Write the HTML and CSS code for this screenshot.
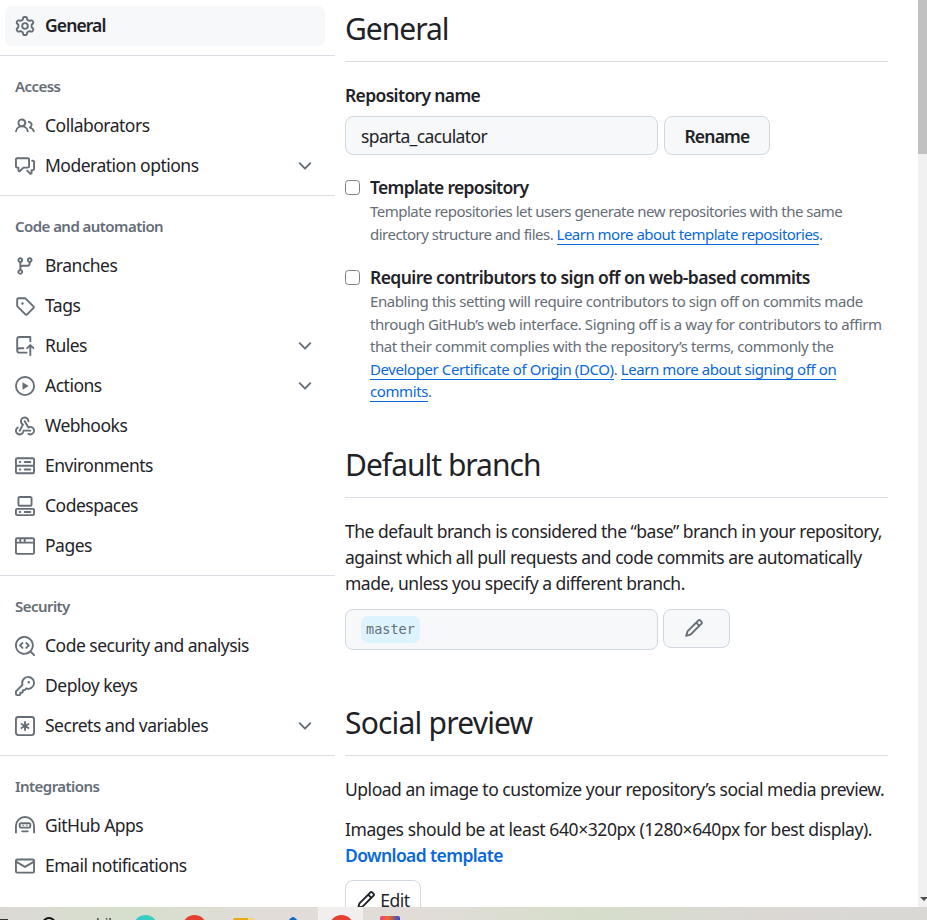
FILE: index.html
```html
<!DOCTYPE html>
<html lang="en">
<head>
<meta charset="UTF-8">
<title>General</title>
<link rel="stylesheet" href="styles.css">
</head>
<body>
<svg class="defs" width="0" height="0">
	<symbol id="i-gear" viewBox="0 0 16 16"><path d="M8 0a8.2 8.2 0 0 1 .701.031C9.444.095 9.99.645 10.16 1.29l.288 1.107c.018.066.079.158.212.224.231.114.454.243.668.386.123.082.233.09.299.071l1.103-.303c.644-.176 1.392.021 1.82.63.27.385.506.792.704 1.218.315.675.111 1.422-.364 1.891l-.814.806c-.049.048-.098.147-.088.294.016.257.016.515 0 .772-.01.147.038.246.088.294l.814.806c.475.469.679 1.216.364 1.891a7.977 7.977 0 0 1-.704 1.217c-.428.61-1.176.807-1.82.63l-1.102-.302c-.067-.019-.177-.011-.3.071a5.909 5.909 0 0 1-.668.386c-.133.066-.194.158-.211.224l-.29 1.106c-.168.646-.715 1.196-1.458 1.26a8.006 8.006 0 0 1-1.402 0c-.743-.064-1.289-.614-1.458-1.26l-.289-1.106c-.018-.066-.079-.158-.212-.224a5.738 5.738 0 0 1-.668-.386c-.123-.082-.233-.09-.299-.071l-1.103.303c-.644.176-1.392-.021-1.82-.63a8.12 8.12 0 0 1-.704-1.218c-.315-.675-.111-1.422.363-1.891l.815-.806c.05-.048.098-.147.088-.294a6.214 6.214 0 0 1 0-.772c.01-.147-.038-.246-.088-.294l-.815-.806C.635 6.045.431 5.298.746 4.623a7.92 7.92 0 0 1 .704-1.217c.428-.61 1.176-.807 1.82-.63l1.102.302c.067.019.177.011.3-.071.214-.143.437-.272.668-.386.133-.066.194-.158.211-.224l.29-1.106C6.009.645 6.556.095 7.299.03 7.53.01 7.764 0 8 0Zm-.571 1.525c-.036.003-.108.036-.137.146l-.289 1.105c-.147.561-.549.967-.998 1.189-.173.086-.34.183-.5.29-.417.278-.97.423-1.529.27l-1.103-.303c-.109-.03-.175.016-.195.045-.22.312-.412.644-.573.99-.014.031-.021.11.059.19l.815.806c.411.406.562.957.53 1.456a4.709 4.709 0 0 0 0 .582c.032.499-.119 1.05-.53 1.456l-.815.806c-.081.08-.073.159-.059.19.162.346.353.677.573.989.02.03.085.076.195.046l1.102-.303c.56-.153 1.113-.008 1.53.27.161.107.328.204.501.29.447.222.85.629.997 1.189l.289 1.105c.029.109.101.143.137.146a6.6 6.6 0 0 0 1.142 0c.036-.003.108-.036.137-.146l.289-1.105c.147-.561.549-.967.998-1.189.173-.086.34-.183.5-.29.417-.278.97-.423 1.529-.27l1.103.303c.109.029.175-.016.195-.045.22-.313.411-.644.573-.99.014-.031.021-.11-.059-.19l-.815-.806c-.411-.406-.562-.957-.53-1.456a4.709 4.709 0 0 0 0-.582c-.032-.499.119-1.05.53-1.456l.815-.806c.081-.08.073-.159.059-.19a6.464 6.464 0 0 0-.573-.989c-.02-.03-.085-.076-.195-.046l-1.102.303c-.56.153-1.113.008-1.53-.27a4.44 4.44 0 0 0-.501-.29c-.447-.222-.85-.629-.997-1.189l-.289-1.105c-.029-.11-.101-.143-.137-.146a6.6 6.6 0 0 0-1.142 0ZM11 8a3 3 0 1 1-6 0 3 3 0 0 1 6 0ZM9.5 8a1.5 1.5 0 1 0-3.001.001A1.5 1.5 0 0 0 9.5 8Z"/></symbol>
	<symbol id="i-people" viewBox="0 0 16 16"><path d="M2 5.5a3.5 3.5 0 1 1 5.898 2.549 5.508 5.508 0 0 1 3.034 4.084.75.75 0 1 1-1.482.235 4 4 0 0 0-7.9 0 .75.75 0 0 1-1.482-.236A5.507 5.507 0 0 1 3.102 8.05 3.493 3.493 0 0 1 2 5.5ZM11 4a3.001 3.001 0 0 1 2.22 5.018 5.01 5.01 0 0 1 2.56 3.012.749.749 0 0 1-.885.954.752.752 0 0 1-.549-.514 3.507 3.507 0 0 0-2.522-2.372.75.75 0 0 1-.574-.73v-.352a.75.75 0 0 1 .416-.672A1.5 1.5 0 0 0 11 5.5.75.75 0 0 1 11 4Zm-5.5-.5a2 2 0 1 0-.001 3.999A2 2 0 0 0 5.5 3.5Z"/></symbol>
	<symbol id="i-discussion" viewBox="0 0 16 16"><path d="M1.75 1h8.5c.966 0 1.75.784 1.75 1.75v5.5A1.75 1.75 0 0 1 10.25 10H7.061l-2.574 2.573A1.458 1.458 0 0 1 2 11.543V10h-.25A1.75 1.75 0 0 1 0 8.25v-5.5C0 1.784.784 1 1.75 1ZM1.5 2.75v5.5c0 .138.112.25.25.25h1a.75.75 0 0 1 .75.75v2.19l2.72-2.72a.749.749 0 0 1 .53-.22h3.5a.25.25 0 0 0 .25-.25v-5.5a.25.25 0 0 0-.25-.25h-8.5a.25.25 0 0 0-.25.25Zm13 2a.25.25 0 0 0-.25-.25h-.5a.75.75 0 0 1 0-1.5h.5c.966 0 1.75.784 1.75 1.75v5.5A1.75 1.75 0 0 1 14.25 12H14v1.543a1.458 1.458 0 0 1-2.487 1.03L9.22 12.28a.749.749 0 0 1 .326-1.275.749.749 0 0 1 .734.215l2.22 2.22v-2.19a.75.75 0 0 1 .75-.75h1a.25.25 0 0 0 .25-.25Z"/></symbol>
	<symbol id="i-branch" viewBox="0 0 16 16"><path d="M9.5 3.25a2.25 2.25 0 1 1 3 2.122V6A2.5 2.5 0 0 1 10 8.5H6a1 1 0 0 0-1 1v1.128a2.251 2.251 0 1 1-1.5 0V5.372a2.25 2.25 0 1 1 1.5 0v1.836A2.493 2.493 0 0 1 6 7h4a1 1 0 0 0 1-1v-.628A2.25 2.25 0 0 1 9.5 3.25Zm-6 0a.75.75 0 1 0 1.5 0 .75.75 0 0 0-1.5 0Zm8.25-.75a.75.75 0 1 0 0 1.5.75.75 0 0 0 0-1.5ZM4.25 12a.75.75 0 1 0 0 1.5.75.75 0 0 0 0-1.5Z"/></symbol>
	<symbol id="i-tag" viewBox="0 0 16 16"><path d="M1 7.775V2.75C1 1.784 1.784 1 2.75 1h5.025c.464 0 .91.184 1.238.513l6.25 6.25a1.75 1.75 0 0 1 0 2.474l-5.026 5.026a1.75 1.75 0 0 1-2.474 0l-6.25-6.25A1.752 1.752 0 0 1 1 7.775Zm1.5 0c0 .066.026.13.073.177l6.25 6.25a.25.25 0 0 0 .354 0l5.025-5.025a.25.25 0 0 0 0-.354l-6.25-6.25a.25.25 0 0 0-.177-.073H2.75a.25.25 0 0 0-.25.25ZM6 5a1 1 0 1 1 0 2 1 1 0 0 1 0-2Z"/></symbol>
	<symbol id="i-rules" viewBox="0 0 16 16"><path d="M1 2.5A2.5 2.5 0 0 1 3.5 0h8.75a.75.75 0 0 1 .75.75v3.5a.75.75 0 0 1-1.5 0V1.5h-8a1 1 0 0 0-1 1v6.708A2.493 2.493 0 0 1 3.5 9h3.25a.75.75 0 0 1 0 1.5H3.5a1 1 0 0 0 0 2h5.75a.75.75 0 0 1 0 1.5H3.5A2.5 2.5 0 0 1 1 11.5Zm13.23 7.79h-.001l-1.224-1.224v6.184a.75.75 0 0 1-1.5 0V9.066L10.28 10.29a.75.75 0 0 1-1.06-1.061l2.505-2.504a.75.75 0 0 1 1.06 0L15.29 9.23a.751.751 0 0 1-.018 1.042.751.751 0 0 1-1.042.018Z"/></symbol>
	<symbol id="i-play" viewBox="0 0 16 16"><path d="M8 0a8 8 0 1 1 0 16A8 8 0 0 1 8 0ZM1.5 8a6.5 6.5 0 1 0 13 0 6.5 6.5 0 0 0-13 0Zm4.879-2.773 4.264 2.559a.25.25 0 0 1 0 .428l-4.264 2.559A.25.25 0 0 1 6 10.559V5.442a.25.25 0 0 1 .379-.215Z"/></symbol>
	<symbol id="i-webhook" viewBox="0 0 16 16"><path d="M5.5 4.25a2.25 2.25 0 0 1 4.5 0 .75.75 0 0 0 1.5 0 3.75 3.75 0 1 0-6.14 2.889l-2.272 4.258a.75.75 0 0 0 1.324.706L7 7.25a.75.75 0 0 0-.309-1.015A2.25 2.25 0 0 1 5.5 4.25Z"/><path d="M7.364 3.607a.75.75 0 0 1 1.03.257l2.608 4.349a3.75 3.75 0 1 1-.628 6.785.75.75 0 0 1 .752-1.299 2.25 2.25 0 1 0-.033-3.88.75.75 0 0 1-1.03-.256L7.107 4.636a.75.75 0 0 1 .257-1.03Z"/><path d="M2.9 8.776A.75.75 0 0 1 2.625 9.8 2.25 2.25 0 1 0 6 11.75a.75.75 0 0 1 .75-.751h5.5a.75.75 0 0 1 0 1.5H7.425a3.751 3.751 0 1 1-5.55-3.998.75.75 0 0 1 1.024.274Z"/></symbol>
	<symbol id="i-server" viewBox="0 0 16 16"><path d="M1.75 1h12.5c.966 0 1.75.784 1.75 1.75v4c0 .372-.116.717-.314 1 .198.283.314.628.314 1v4a1.75 1.75 0 0 1-1.75 1.75H1.75A1.75 1.75 0 0 1 0 12.75v-4c0-.358.109-.707.314-1a1.739 1.739 0 0 1-.314-1v-4C0 1.784.784 1 1.75 1ZM1.5 2.75v4c0 .138.112.25.25.25h12.5a.25.25 0 0 0 .25-.25v-4a.25.25 0 0 0-.25-.25H1.75a.25.25 0 0 0-.25.25Zm.25 5.75a.25.25 0 0 0-.25.25v4c0 .138.112.25.25.25h12.5a.25.25 0 0 0 .25-.25v-4a.25.25 0 0 0-.25-.25ZM7 4.75A.75.75 0 0 1 7.75 4h4.5a.75.75 0 0 1 0 1.5h-4.5A.75.75 0 0 1 7 4.75ZM7.75 10h4.5a.75.75 0 0 1 0 1.5h-4.5a.75.75 0 0 1 0-1.5ZM3 4.75A.75.75 0 0 1 3.75 4h.5a.75.75 0 0 1 0 1.5h-.5A.75.75 0 0 1 3 4.75ZM3.75 10h.5a.75.75 0 0 1 0 1.5h-.5a.75.75 0 0 1 0-1.5Z"/></symbol>
	<symbol id="i-codespaces" viewBox="0 0 16 16"><path d="M0 11.25c0-.966.784-1.75 1.75-1.75h12.5c.966 0 1.75.784 1.75 1.75v3A1.75 1.75 0 0 1 14.25 16H1.75A1.75 1.75 0 0 1 0 14.25Zm2-9.5C2 .784 2.784 0 3.75 0h8.5C13.216 0 14 .784 14 1.75v5a1.75 1.75 0 0 1-1.75 1.75h-8.5A1.75 1.75 0 0 1 2 6.75Zm1.75-.25a.25.25 0 0 0-.25.25v5c0 .138.112.25.25.25h8.5a.25.25 0 0 0 .25-.25v-5a.25.25 0 0 0-.25-.25Zm-2 9.5a.25.25 0 0 0-.25.25v3c0 .138.112.25.25.25h12.5a.25.25 0 0 0 .25-.25v-3a.25.25 0 0 0-.25-.25Z"/><path d="M7 12.75a.75.75 0 0 1 .75-.75h4.5a.75.75 0 0 1 0 1.5h-4.5a.75.75 0 0 1-.75-.75Zm-4 0a.75.75 0 0 1 .75-.75h.5a.75.75 0 0 1 0 1.5h-.5a.75.75 0 0 1-.75-.75Z"/></symbol>
	<symbol id="i-browser" viewBox="0 0 16 16"><path d="M0 2.75C0 1.784.784 1 1.75 1h12.5c.966 0 1.75.784 1.75 1.75v10.5A1.75 1.75 0 0 1 14.25 15H1.75A1.75 1.75 0 0 1 0 13.25ZM14.5 6h-13v7.25c0 .138.112.25.25.25h12.5a.25.25 0 0 0 .25-.25Zm-6-3.5v2h6V2.75a.25.25 0 0 0-.25-.25ZM5 2.5v2h2v-2Zm-3.25 0a.25.25 0 0 0-.25.25V4.5h2v-2Z"/></symbol>
	<symbol id="i-codescan" viewBox="0 0 16 16"><path d="M8.47 4.97a.75.75 0 0 0 0 1.06L9.94 7.5 8.47 8.97a.75.75 0 1 0 1.06 1.06l2-2a.75.75 0 0 0 0-1.06l-2-2a.75.75 0 0 0-1.06 0ZM6.53 6.03a.75.75 0 0 0-1.06-1.06l-2 2a.75.75 0 0 0 0 1.06l2 2a.75.75 0 1 0 1.06-1.06L5.06 7.5l1.47-1.47Z"/><path d="M12.246 13.307a7.501 7.501 0 1 1 1.06-1.06l2.474 2.473a.749.749 0 0 1-.326 1.275.749.749 0 0 1-.734-.215ZM1.5 7.5a6.002 6.002 0 0 0 3.608 5.504 6.002 6.002 0 0 0 6.486-1.117.75.75 0 0 1 .293-.293A6 6 0 1 0 1.5 7.5Z"/></symbol>
	<symbol id="i-key" viewBox="0 0 16 16"><path d="M10.5 0a5.499 5.499 0 1 1-1.288 10.848l-.932.932a.749.749 0 0 1-.53.22H7v.75a.749.749 0 0 1-.22.53l-.5.5a.749.749 0 0 1-.53.22H5v.75a.749.749 0 0 1-.22.53l-.5.5a.749.749 0 0 1-.53.22h-2A1.75 1.75 0 0 1 0 14.25v-2c0-.199.079-.389.22-.53l4.932-4.932A5.5 5.5 0 0 1 10.5 0Zm-4 5.5c-.001.431.069.86.205 1.269a.75.75 0 0 1-.181.768L1.5 12.56v1.69c0 .138.112.25.25.25h1.69l.06-.06v-1.19a.75.75 0 0 1 .75-.75h1.19l.06-.06v-1.19a.75.75 0 0 1 .75-.75h1.19l1.023-1.025a.75.75 0 0 1 .768-.18A4 4 0 1 0 6.5 5.5ZM11 6a1 1 0 1 1 0-2 1 1 0 0 1 0 2Z"/></symbol>
	<symbol id="i-asterisk" viewBox="0 0 16 16"><path d="M0 2.75A2.75 2.75 0 0 1 2.75 0h10.5A2.75 2.75 0 0 1 16 2.75v10.5A2.75 2.75 0 0 1 13.25 16H2.75A2.75 2.75 0 0 1 0 13.25ZM2.75 1.5c-.69 0-1.25.56-1.25 1.25v10.5c0 .69.56 1.25 1.25 1.25h10.5c.69 0 1.25-.56 1.25-1.25V2.75c0-.69-.56-1.25-1.25-1.25Z"/><path d="M8 4a.75.75 0 0 1 .75.75V6.7l1.69-.975a.75.75 0 0 1 .75 1.3L9.5 8l1.69.976a.75.75 0 0 1-.75 1.298L8.75 9.3v1.951a.75.75 0 0 1-1.5 0V9.299l-1.69.976a.75.75 0 0 1-.75-1.3L6.5 8l-1.69-.975a.75.75 0 0 1 .75-1.3l1.69.976V4.75A.75.75 0 0 1 8 4Z"/></symbol>
	<symbol id="i-hubot" viewBox="0 0 16 16"><path d="M0 8a8 8 0 0 1 16 0v5.25a.75.75 0 0 1-1.5 0V8a6.5 6.5 0 1 0-13 0v5.25a.75.75 0 0 1-1.5 0Z"/><path d="M3 6.75C3 5.784 3.784 5 4.75 5h6.5c.966 0 1.75.784 1.75 1.75v1.5A1.75 1.75 0 0 1 11.25 10h-6.5A1.75 1.75 0 0 1 3 8.25Zm1.75-.25a.25.25 0 0 0-.25.25v1.5c0 .138.112.25.25.25h6.5a.25.25 0 0 0 .25-.25v-1.5a.25.25 0 0 0-.25-.25Z"/><path d="M6 7h1v1H6ZM9 7h1v1H9ZM5.75 11.5h4.5a.75.75 0 0 1 0 1.5h-4.5a.75.75 0 0 1 0-1.5Z"/></symbol>
	<symbol id="i-mail" viewBox="0 0 16 16"><path d="M1.75 2h12.5c.966 0 1.75.784 1.75 1.75v8.5A1.75 1.75 0 0 1 14.25 14H1.75A1.75 1.75 0 0 1 0 12.25v-8.5C0 2.784.784 2 1.75 2ZM1.5 12.251c0 .138.112.25.25.25h12.5a.25.25 0 0 0 .25-.25V5.809L8.38 9.397a.75.75 0 0 1-.76 0L1.5 5.809v6.442Zm13-8.181v-.32a.25.25 0 0 0-.25-.25H1.75a.25.25 0 0 0-.25.25v.32L8 7.88Z"/></symbol>
	<symbol id="i-chevron" viewBox="0 0 16 16"><path d="M12.78 5.22a.749.749 0 0 1 0 1.06l-4.25 4.25a.749.749 0 0 1-1.06 0L3.22 6.28a.749.749 0 1 1 1.06-1.06L8 8.939l3.72-3.719a.749.749 0 0 1 1.06 0Z"/></symbol>
	<symbol id="i-pencil" viewBox="0 0 16 16"><path d="M11.013 1.427a1.75 1.75 0 0 1 2.474 0l1.086 1.086a1.75 1.75 0 0 1 0 2.474l-8.61 8.61c-.21.21-.47.364-.756.445l-3.251.93a.75.75 0 0 1-.927-.928l.929-3.25c.081-.286.235-.547.445-.758l8.61-8.61Zm.176 4.823L9.75 4.81l-6.286 6.287a.253.253 0 0 0-.064.108l-.558 1.953 1.953-.558a.253.253 0 0 0 .108-.064Zm1.238-3.763a.25.25 0 0 0-.354 0L10.811 3.75l1.439 1.44 1.263-1.263a.25.25 0 0 0 0-.354Z"/></symbol>
</svg>

<div class="page">
	<nav class="sidebar">
		<a class="nav-item current"><svg class="icon"><use href="#i-gear"/></svg>General</a>

		<div class="nav-group">
			<h3 class="nav-label">Access</h3>
			<a class="nav-item"><svg class="icon"><use href="#i-people"/></svg>Collaborators</a>
			<a class="nav-item"><svg class="icon"><use href="#i-discussion"/></svg>Moderation options<svg class="chevron"><use href="#i-chevron"/></svg></a>
		</div>

		<div class="nav-group">
			<h3 class="nav-label">Code and automation</h3>
			<a class="nav-item"><svg class="icon"><use href="#i-branch"/></svg>Branches</a>
			<a class="nav-item"><svg class="icon"><use href="#i-tag"/></svg>Tags</a>
			<a class="nav-item"><svg class="icon"><use href="#i-rules"/></svg>Rules<svg class="chevron"><use href="#i-chevron"/></svg></a>
			<a class="nav-item"><svg class="icon"><use href="#i-play"/></svg>Actions<svg class="chevron"><use href="#i-chevron"/></svg></a>
			<a class="nav-item"><svg class="icon"><use href="#i-webhook"/></svg>Webhooks</a>
			<a class="nav-item"><svg class="icon"><use href="#i-server"/></svg>Environments</a>
			<a class="nav-item"><svg class="icon"><use href="#i-codespaces"/></svg>Codespaces</a>
			<a class="nav-item"><svg class="icon"><use href="#i-browser"/></svg>Pages</a>
		</div>

		<div class="nav-group">
			<h3 class="nav-label">Security</h3>
			<a class="nav-item"><svg class="icon"><use href="#i-codescan"/></svg>Code security and analysis</a>
			<a class="nav-item"><svg class="icon"><use href="#i-key"/></svg>Deploy keys</a>
			<a class="nav-item"><svg class="icon"><use href="#i-asterisk"/></svg>Secrets and variables<svg class="chevron"><use href="#i-chevron"/></svg></a>
		</div>

		<div class="nav-group">
			<h3 class="nav-label">Integrations</h3>
			<a class="nav-item"><svg class="icon"><use href="#i-hubot"/></svg>GitHub Apps</a>
			<a class="nav-item"><svg class="icon"><use href="#i-mail"/></svg>Email notifications</a>
		</div>
	</nav>

	<main class="content">
		<h2 class="section-title first">General</h2>

		<label class="field-label" for="repo-name">Repository name</label>
		<div class="name-row">
			<input id="repo-name" class="text-input" value="sparta_caculator">
			<button class="btn btn-rename">Rename</button>
		</div>

		<div class="option option-template">
			<label class="option-title"><input type="checkbox" class="check">Template repository</label>
			<p class="option-note">Template repositories let users generate new repositories with the same directory structure and files. <a class="note-link">Learn more about template repositories</a>.</p>
		</div>

		<div class="option option-signoff">
			<label class="option-title"><input type="checkbox" class="check">Require contributors to sign off on web-based commits</label>
			<p class="option-note">Enabling this setting will require contributors to sign off on commits made through GitHub’s web interface. Signing off is a way for contributors to affirm that their commit complies with the repository’s terms, commonly the <a class="note-link">Developer Certificate of Origin (DCO)</a>. <a class="note-link">Learn more about signing off on commits</a>.</p>
		</div>

		<h2 class="section-title branch-title">Default branch</h2>
		<p class="copy branch-copy">The default branch is considered the “base” branch in your repository, against which all pull requests and code commits are automatically made, unless you specify a different branch.</p>
		<div class="branch-row">
			<div class="branch-box"><code class="branch-chip">master</code></div>
			<button class="btn btn-pencil"><svg class="icon"><use href="#i-pencil"/></svg></button>
		</div>

		<h2 class="section-title social-title">Social preview</h2>
		<p class="copy upload-copy">Upload an image to customize your repository’s social media preview.</p>
		<p class="copy size-copy">Images should be at least 640×320px (1280×640px for best display).<br><a class="download-link">Download template</a></p>
		<button class="btn btn-edit"><svg class="icon"><use href="#i-pencil"/></svg>Edit</button>
	</main>

	<div class="scrollbar">
		<div class="scroll-thumb"></div>
		<div class="scroll-arrow"></div>
	</div>
</div>

<footer class="taskbar">
	<span class="tb-filter"></span>
	<span class="tb-search"></span>
	<span class="tb-text">while</span>
	<span class="tb-app tb-teal"></span>
	<span class="tb-app tb-red"></span>
	<span class="tb-app tb-folder"></span>
	<span class="tb-app tb-blue"></span>
	<span class="tb-active"><span class="tb-app tb-red"></span></span>
	<span class="tb-app tb-colors"></span>
</footer>
</body>
</html>
```

FILE: styles.css
```css
* { box-sizing: border-box; }

html, body {
	margin: 0;
	height: 920px;
	overflow: hidden;
}
body {
	font-family: "Noto Sans", "Open Sans", sans-serif;
	font-size: 17.5px;
	letter-spacing: -0.5px;
	color: #1f2328;
	background: #fff;
}
.defs { position: absolute; }

.page {
	display: flex;
	height: 907px;
	overflow: hidden;
}

/* left menu */
.sidebar {
	flex: none;
	width: 335px;
	padding-top: 6px;
}
.nav-item {
	display: flex;
	align-items: center;
	height: 40px;
	margin: 0 10px 0 5px;
	padding: 0 10px 2px 10px;
	border-radius: 7px;
}
.nav-item.current {
	background: #f6f8fa;
	font-weight: 600;
	letter-spacing: -0.9px;
}
.icon {
	flex: none;
	width: 20px;
	height: 20px;
	margin: 2px 10px 0 0;
	fill: #656d76;
}
.chevron {
	width: 20px;
	height: 20px;
	margin: 2px 0 0 auto;
	fill: #656d76;
}
.nav-group {
	margin-top: 9px;
	border-top: 1px solid #d8dee4;
}
.nav-label {
	margin: 0;
	padding: 20px 15px 10px;
	font-size: 15px;
	font-weight: 600;
	line-height: 20px;
	letter-spacing: -0.55px;
	color: #656d76;
}

/* settings column */
.content {
	flex: none;
	width: 543px;
	margin-left: 10px;
	padding-top: 7px;
}
.section-title {
	margin: 0;
	padding-bottom: 10px;
	border-bottom: 1px solid #d8dee4;
	font-size: 30px;
	font-weight: 400;
	line-height: 44px;
	letter-spacing: -1px;
}
.branch-title { margin-top: 40px; }
.social-title {
	margin-top: 51px;
	letter-spacing: -0.8px;
}

.field-label {
	display: block;
	margin-top: 20px;
	font-weight: 600;
	line-height: 26px;
	letter-spacing: -0.65px;
}
.name-row {
	display: flex;
	gap: 6px;
	margin-top: 8px;
}
.text-input {
	width: 313px;
	height: 39px;
	padding: 0 15px;
	border: 1px solid #d0d7de;
	border-radius: 8px;
	background: #f6f8fa;
	font: inherit;
	letter-spacing: -0.62px;
	color: #1f2328;
}
.btn {
	display: flex;
	align-items: center;
	justify-content: center;
	border: 1px solid #d0d7de;
	border-radius: 8px;
	background: #f6f8fa;
	font: inherit;
	font-weight: 600;
	letter-spacing: -0.8px;
	color: #1f2328;
}
.btn-rename {
	width: 106px;
	height: 39px;
}

.option-template { margin-top: 19px; }
.option-signoff { margin-top: 19px; }
.option-title {
	display: flex;
	align-items: center;
	font-weight: 600;
	line-height: 26px;
	letter-spacing: -0.7px;
}
.option-signoff .option-title { letter-spacing: -0.57px; }
.check {
	width: 15px;
	height: 15px;
	margin: 0 10px 0 0;
	appearance: none;
	border: 1px solid #7a7f85;
	border-radius: 3.5px;
	background: #fff;
}
.option-note {
	margin: 0;
	padding-left: 25px;
	font-size: 15px;
	line-height: 22.5px;
	letter-spacing: -0.51px;
	color: #656d76;
}
.option-signoff .option-note { letter-spacing: -0.41px; }
.note-link {
	color: #0969da;
	border-bottom: 1px solid #0969da;
}

.copy {
	margin: 0;
	line-height: 26px;
}
.branch-copy { margin-top: 20px; }
.upload-copy {
	margin-top: 20px;
	letter-spacing: -0.47px;
}
.size-copy {
	margin-top: 14px;
	letter-spacing: -0.425px;
}
.download-link {
	font-weight: 600;
	letter-spacing: -0.6px;
	color: #0969da;
}

.branch-row {
	display: flex;
	gap: 5px;
	margin-top: 13px;
}
.branch-box {
	display: flex;
	align-items: center;
	width: 313px;
	height: 41px;
	padding-left: 15px;
	border: 1px solid #d0d7de;
	border-radius: 8px;
	background: #f6f8fa;
}
.branch-chip {
	padding: 4.5px 5px;
	border-radius: 7px;
	background: #ddf4ff;
	font-family: "DejaVu Sans Mono", monospace;
	font-size: 13.5px;
	line-height: 18px;
	letter-spacing: 0;
	color: #656d76;
}
.btn-pencil {
	width: 67px;
	height: 39px;
}
.btn-pencil .icon { margin: 0 6px 0 0; }
.btn-edit {
	width: 76px;
	height: 40px;
	margin-top: 12px;
	background: #fff;
	font-weight: 400;
	letter-spacing: -0.5px;
}
.btn-edit .icon {
	margin: 0 4px 0 0;
	fill: #1f2328;
}

/* browser scrollbar and the sliver of desktop under the window */
.scrollbar {
	position: relative;
	flex: none;
	width: 9px;
	margin-left: auto;
	background: #f1f1f1;
}
.scroll-thumb {
	height: 154px;
	background: #c1c1c1;
}
.scroll-arrow {
	position: absolute;
	right: -1px;
	bottom: 6px;
	border: 4px solid transparent;
	border-top-color: #505050;
	border-bottom: 0;
}
.taskbar {
	display: flex;
	height: 13px;
	overflow: hidden;
	background: linear-gradient(90deg, #dcd9d5 0, #d6dfcd 130px, #e1dcd8 260px, #e2dcd9 420px, #d6decb 580px, #dbd8d4 760px, #dad8d5 100%);
}
.tb-filter {
	flex: none;
	width: 8px;
	height: 1px;
	margin-top: 12px;
	background: #333;
}
.tb-search {
	flex: none;
	width: 14px;
	height: 14px;
	margin: 10px 0 0 34px;
	border: 2px solid #111;
	border-radius: 50%;
}
.tb-text {
	flex: none;
	width: 30px;
	margin: 8px 0 0 29px;
	font-size: 14px;
	line-height: 18px;
	letter-spacing: 0;
	color: #333;
}
.tb-app {
	display: block;
	flex: none;
	width: 25px;
	height: 25px;
	margin-top: 8px;
	border-radius: 50%;
}
.tb-teal { margin-left: 18px; background: linear-gradient(90deg, #35c4d8, #3dd6b0); }
.tb-red { margin-left: 24px; background: #e5402f; }
.tb-folder {
	width: 22px;
	margin: 11px 0 0 26px;
	border-radius: 2px;
	background: linear-gradient(90deg, #e9a914 70%, #f0d58a 70%);
}
.tb-blue {
	width: 20px;
	height: 20px;
	margin: 13px 0 0 28px;
	border-radius: 3px;
	background: #0e6cc0;
	transform: rotate(45deg);
}
.tb-active {
	flex: none;
	width: 45px;
	margin-left: 15px;
	background: #f2eeed;
}
.tb-active .tb-red { margin: 8px 0 0 11px; }
.tb-colors {
	width: 20px;
	height: 20px;
	margin: 9px 0 0 17px;
	border-radius: 2px;
	background: linear-gradient(90deg, #e83e8c, #f26b1d 40%, #2d4bd6);
}
```
